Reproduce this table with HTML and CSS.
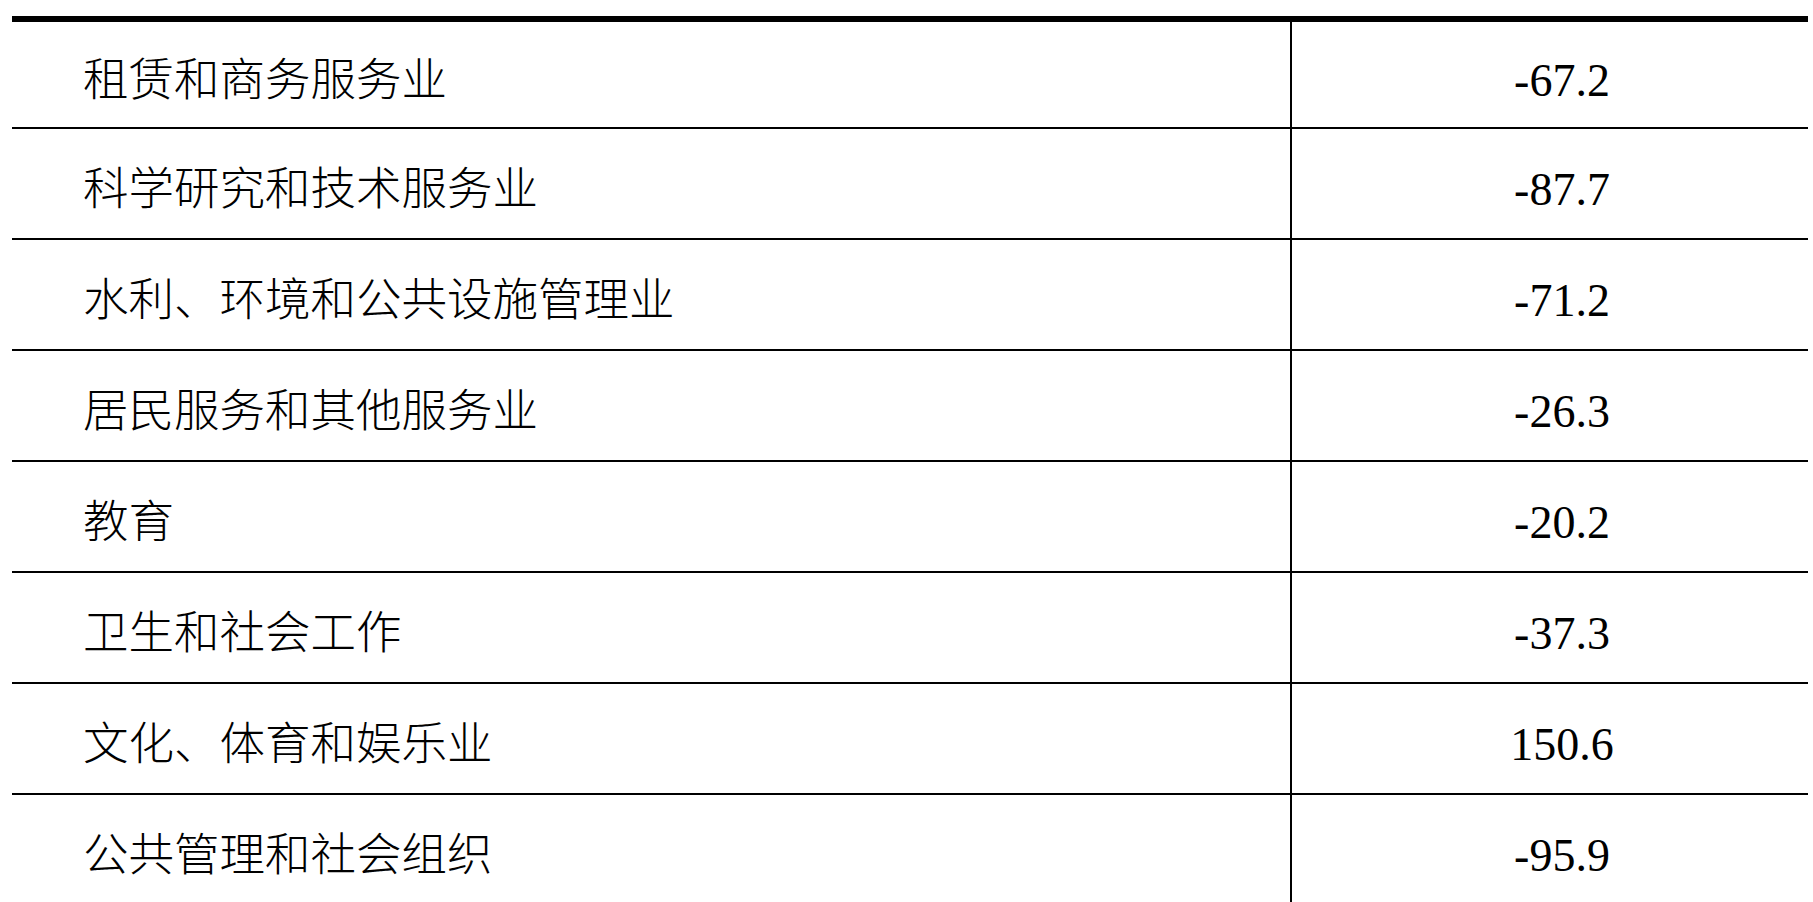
FILE: index.html
```html
<!DOCTYPE html>
<html lang="zh-CN">
<head>
<meta charset="utf-8">
<link rel="stylesheet" href="styles.css">
</head>
<body>
<div class="table">
  <div class="row first"><div class="name">租赁和商务服务业</div><div class="val">-67.2</div></div>
  <div class="row"><div class="name">科学研究和技术服务业</div><div class="val">-87.7</div></div>
  <div class="row"><div class="name">水利、环境和公共设施管理业</div><div class="val">-71.2</div></div>
  <div class="row"><div class="name">居民服务和其他服务业</div><div class="val">-26.3</div></div>
  <div class="row"><div class="name">教育</div><div class="val">-20.2</div></div>
  <div class="row"><div class="name">卫生和社会工作</div><div class="val">-37.3</div></div>
  <div class="row"><div class="name">文化、体育和娱乐业</div><div class="val">150.6</div></div>
  <div class="row last"><div class="name">公共管理和社会组织</div><div class="val">-95.9</div></div>
</div>
</body>
</html>
```
FILE: styles.css
```css
html, body {
  margin: 0;
  padding: 0;
  background: #fff;
  overflow: hidden;
}
body {
  font-family: "Liberation Serif", "Noto Sans CJK SC", serif;
  color: #000;
  font-size: 46px;
}
.table {
  margin: 16px 0 0 12px;
  width: 1796px;
  border-top: 6px solid #000;
}
.row {
  display: grid;
  grid-template-columns: 1278px 1fr;
  height: 109px;
  border-bottom: 2px solid #000;
}
.row.first {
  height: 105px;
}
.row.last {
  border-bottom: none;
  height: 140px;
}
.name {
  display: flex;
  align-items: center;
  padding-left: 71px;
  padding-top: 12px;
  line-height: 1;
  white-space: nowrap;
  font-weight: 300;
  font-size: 45.5px;
}
.val {
  display: flex;
  align-items: center;
  justify-content: center;
  border-left: 2px solid #000;
  padding-left: 24px;
  padding-top: 12px;
  line-height: 1;
}
.row.last .name,
.row.last .val {
  align-items: flex-start;
  padding-top: 38px;
}
```
